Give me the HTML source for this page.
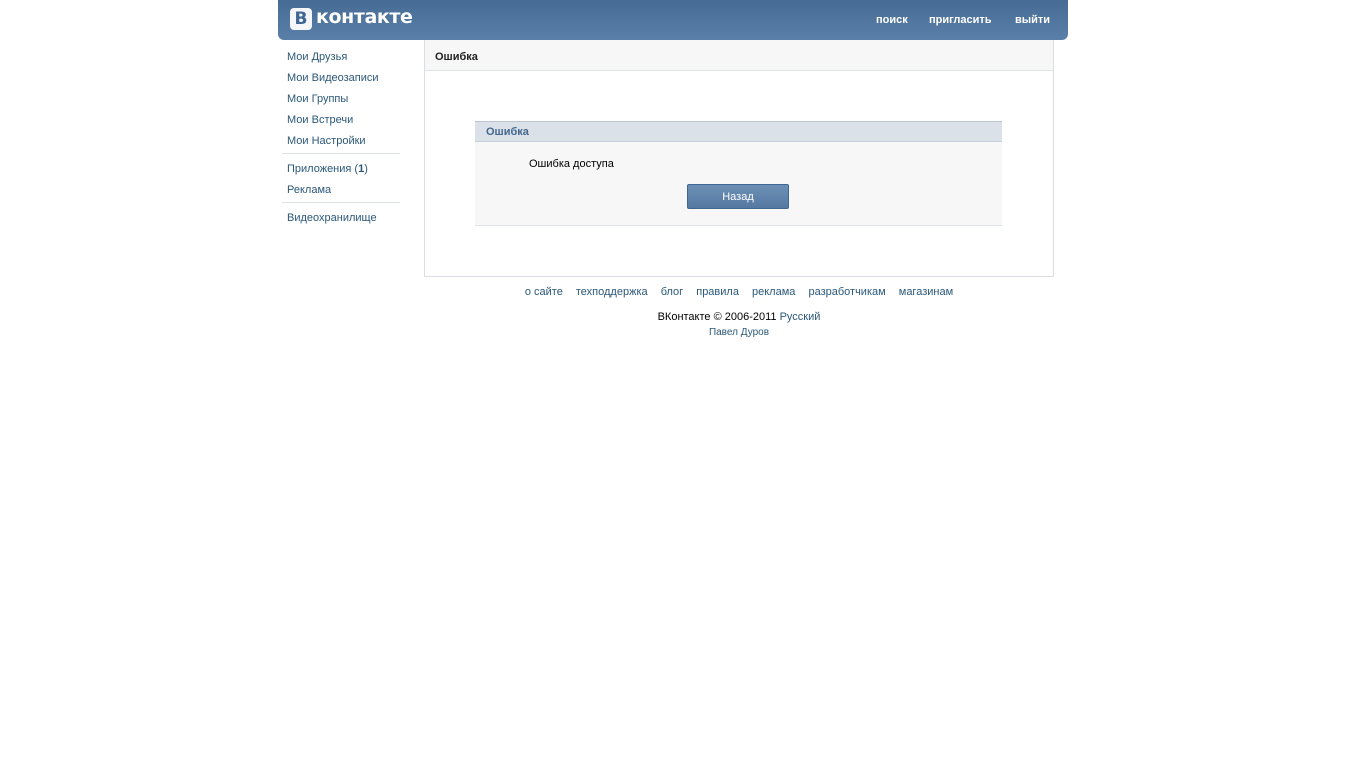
<!DOCTYPE html>
<html><head><meta charset="utf-8"><style>
body{margin:0;background:#fff;font-family:"Liberation Sans",Arial,sans-serif;font-size:11px;color:#000;width:1366px;height:768px;position:relative;overflow:hidden}
a{color:#2b587a;text-decoration:none}
.abs{position:absolute}
#head{left:278px;top:0;width:790px;height:40px;background:linear-gradient(#466b94,#5a7fa8);border-radius:0 0 6px 6px}
#logo{left:12px;top:8px;width:22px;height:22px;background:#f4f6f9;border-radius:4px;color:#3f6592;font:bold 17px/22px "DejaVu Sans",sans-serif;text-align:center}
#logot{left:38px;top:6px;color:#fff;font:bold 19px "DejaVu Sans",sans-serif;letter-spacing:-0.4px}
.top{top:14px;color:#fff;font-weight:bold;font-size:11px}
.menu a{position:absolute;left:287px;font-size:11px}
.sep{position:absolute;left:282px;width:118px;height:1px;background:#dde3ea}
#main{left:424px;top:40px;width:628px;height:236px;border:1px solid #dadee3;border-top:none}
#mh{left:0;top:0;width:628px;height:30px;background:#f7f7f7;border-bottom:1px solid #dde3ea}
#box{left:50px;top:81px;width:527px;height:104px;background:#f7f7f7;border-bottom:1px solid #dde3ea}
#bh{left:0;top:0;width:527px;height:19px;background:#dae1e8;border-top:1px solid #b9c4d0;border-bottom:1px solid #c7d1db}
#btn{left:212px;top:63px;width:100px;height:23px;background:linear-gradient(#6b8fb4,#5579a1);border:1px solid #3e6791;border-radius:2px;color:#fff;text-align:center;line-height:25px}
.f a{margin:0 5px}
</style></head><body>
<div id="head" class="abs">
<div id="logo" class="abs">В</div>
<div id="logot" class="abs">контакте</div>
<span class="abs top" style="left:598px">поиск</span>
<span class="abs top" style="left:651px">пригласить</span>
<span class="abs top" style="left:737px">выйти</span>
</div>
<div class="menu">
<a style="top:51px">Мои Друзья</a>
<a style="top:72px">Мои Видеозаписи</a>
<a style="top:93px">Мои Группы</a>
<a style="top:114px">Мои Встречи</a>
<a style="top:135px">Мои Настройки</a>
<div class="sep" style="top:153px"></div>
<a style="top:163px">Приложения (<b>1</b>)</a>
<a style="top:184px">Реклама</a>
<div class="sep" style="top:202px"></div>
<a style="top:212px">Видеохранилище</a>
</div>
<div id="main" class="abs">
<div id="mh" class="abs"><b class="abs" style="left:10px;top:11px;color:#222">Ошибка</b></div>
<div id="box" class="abs">
<div id="bh" class="abs"><b class="abs" style="left:11px;top:4px;color:#45688e">Ошибка</b></div>
<span class="abs" style="left:54px;top:37px">Ошибка доступа</span>
<div id="btn" class="abs">Назад</div>
</div>
</div>
<div class="abs f" style="left:424px;width:630px;top:286px;text-align:center">
<a>о сайте</a> <a>техподдержка</a> <a>блог</a> <a>правила</a> <a>реклама</a> <a>разработчикам</a> <a>магазинам</a>
</div>
<div class="abs" style="left:424px;width:630px;top:311px;text-align:center">ВКонтакте © 2006-2011 <a>Русский</a></div>
<div class="abs" style="left:424px;width:630px;top:327px;text-align:center;font-size:10px"><a>Павел Дуров</a></div>
</body></html>
